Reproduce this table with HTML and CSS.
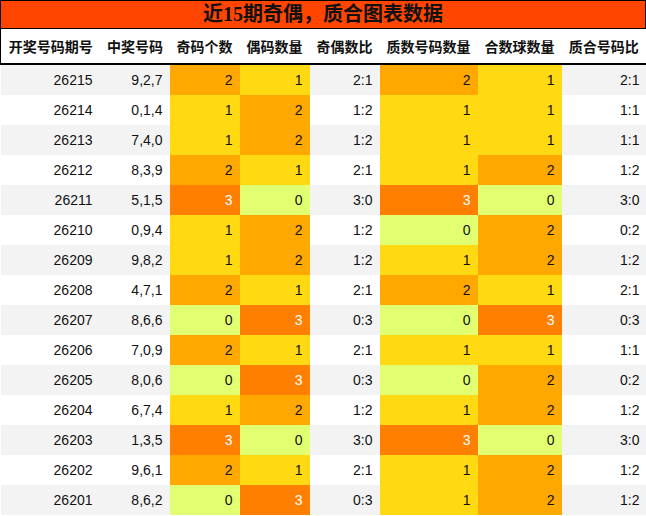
FILE: index.html
```html
<!DOCTYPE html>
<html lang="zh-CN">
<head>
<meta charset="utf-8">
<title>近15期奇偶，质合图表数据</title>
<link rel="stylesheet" href="styles.css">
</head>
<body>
<div class="title">近15期奇偶，质合图表数据</div>
<table class="grid">
<colgroup>
<col class="w1"><col class="w2"><col class="w3"><col class="w3"><col class="w3"><col class="w6"><col class="w7"><col class="w8">
</colgroup>
<thead>
<tr><th>开奖号码期号</th><th>中奖号码</th><th>奇码个数</th><th>偶码数量</th><th>奇偶数比</th><th>质数号码数量</th><th>合数球数量</th><th>质合号码比</th></tr>
</thead>
<tbody>
<tr><td>26215</td><td>9,2,7</td><td class="c2">2</td><td class="c1">1</td><td>2:1</td><td class="c2">2</td><td class="c1">1</td><td>2:1</td></tr>
<tr><td>26214</td><td>0,1,4</td><td class="c1">1</td><td class="c2">2</td><td>1:2</td><td class="c1">1</td><td class="c1">1</td><td>1:1</td></tr>
<tr><td>26213</td><td>7,4,0</td><td class="c1">1</td><td class="c2">2</td><td>1:2</td><td class="c1">1</td><td class="c1">1</td><td>1:1</td></tr>
<tr><td>26212</td><td>8,3,9</td><td class="c2">2</td><td class="c1">1</td><td>2:1</td><td class="c1">1</td><td class="c2">2</td><td>1:2</td></tr>
<tr><td>26211</td><td>5,1,5</td><td class="c3">3</td><td class="c0">0</td><td>3:0</td><td class="c3">3</td><td class="c0">0</td><td>3:0</td></tr>
<tr><td>26210</td><td>0,9,4</td><td class="c1">1</td><td class="c2">2</td><td>1:2</td><td class="c0">0</td><td class="c2">2</td><td>0:2</td></tr>
<tr><td>26209</td><td>9,8,2</td><td class="c1">1</td><td class="c2">2</td><td>1:2</td><td class="c1">1</td><td class="c2">2</td><td>1:2</td></tr>
<tr><td>26208</td><td>4,7,1</td><td class="c2">2</td><td class="c1">1</td><td>2:1</td><td class="c2">2</td><td class="c1">1</td><td>2:1</td></tr>
<tr><td>26207</td><td>8,6,6</td><td class="c0">0</td><td class="c3">3</td><td>0:3</td><td class="c0">0</td><td class="c3">3</td><td>0:3</td></tr>
<tr><td>26206</td><td>7,0,9</td><td class="c2">2</td><td class="c1">1</td><td>2:1</td><td class="c1">1</td><td class="c1">1</td><td>1:1</td></tr>
<tr><td>26205</td><td>8,0,6</td><td class="c0">0</td><td class="c3">3</td><td>0:3</td><td class="c0">0</td><td class="c2">2</td><td>0:2</td></tr>
<tr><td>26204</td><td>6,7,4</td><td class="c1">1</td><td class="c2">2</td><td>1:2</td><td class="c1">1</td><td class="c2">2</td><td>1:2</td></tr>
<tr><td>26203</td><td>1,3,5</td><td class="c3">3</td><td class="c0">0</td><td>3:0</td><td class="c3">3</td><td class="c0">0</td><td>3:0</td></tr>
<tr><td>26202</td><td>9,6,1</td><td class="c2">2</td><td class="c1">1</td><td>2:1</td><td class="c1">1</td><td class="c2">2</td><td>1:2</td></tr>
<tr><td>26201</td><td>8,6,2</td><td class="c0">0</td><td class="c3">3</td><td>0:3</td><td class="c1">1</td><td class="c2">2</td><td>1:2</td></tr>
</tbody>
</table>
</body>
</html>
```
FILE: styles.css
```css
html, body {
  margin: 0;
  padding: 0;
  background: #fff;
}
body {
  width: 646px;
  font-family: "Liberation Sans", "Noto Sans CJK SC", sans-serif;
  color: #111;
}
.title {
  box-sizing: border-box;
  height: 29px;
  border: 1px solid #000;
  background: #ff4500;
  color: #111;
  text-align: center;
  font-family: "Liberation Serif", "Noto Sans CJK SC", serif;
  font-weight: bold;
  font-size: 20px;
  line-height: 27px;
}
.grid {
  width: 646px;
  border-collapse: collapse;
  table-layout: fixed;
}
.w1 { width: 100px; }
.w2 { width: 69px; }
.w3 { width: 70px; }
.w6 { width: 98px; }
.w7 { width: 84px; }
.w8 { width: 85px; }
.grid th {
  height: 34px;
  padding: 0;
  font-family: "Noto Sans CJK SC", sans-serif;
  font-weight: bold;
  font-size: 14px;
  color: #111;
  text-align: center;
  border-bottom: 2px solid #000;
  background: #fff;
}
.grid th:first-child { border-left: 1px solid #000; }
.grid th:last-child { border-right: 1px solid #000; }
.grid td {
  height: 30px;
  padding: 0 7px 0 0;
  font-size: 14px;
  text-align: right;
  color: #111;
}
.grid td:first-child { padding-right: 8px; }
.grid tbody tr:nth-child(odd) { background: #f3f3f3; }
.grid tbody tr:nth-child(even) { background: #fff; }
.grid td.c0 { background: #e1ff70; }
.grid td.c1 { background: #ffd912; }
.grid td.c2 { background: #ffa800; }
.grid td.c3 { background: #ff8000; color: #fff; }
```
